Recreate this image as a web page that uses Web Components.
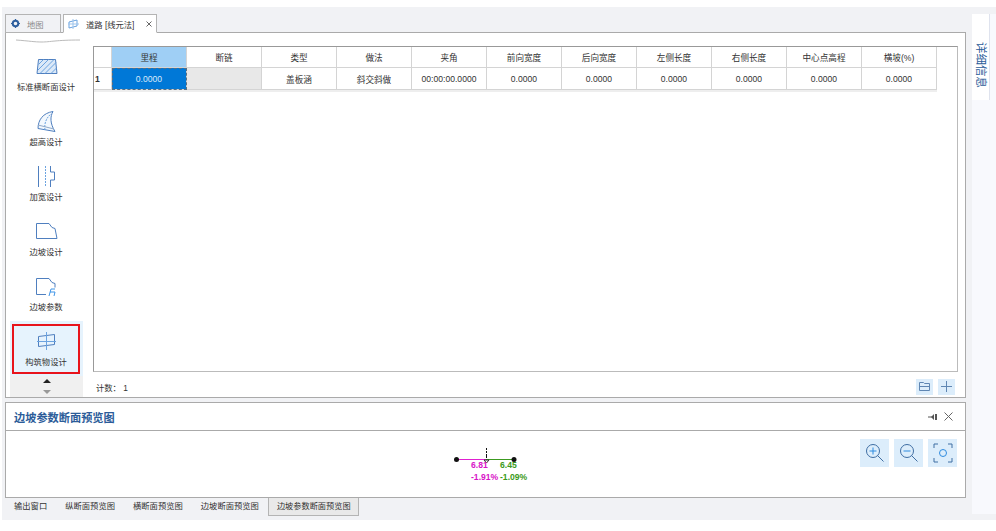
<!DOCTYPE html>
<html lang="zh">
<head>
<meta charset="utf-8">
<title>道路</title>
<style>
  html, body { margin: 0; background: #fff; }
  body { font: 8.3px "Liberation Sans", "Noto Sans CJK SC", sans-serif; color: #333; }
</style>
</head>
<body>
<app-shell>
  <doc-tabs slot="tabs"></doc-tabs>
  <side-nav slot="nav"></side-nav>
  <data-grid slot="grid"></data-grid>
  <grid-footer slot="footer"></grid-footer>
  <preview-panel slot="preview"></preview-panel>
  <bottom-tabs slot="bottom"></bottom-tabs>
  <detail-rail slot="rail"></detail-rail>
</app-shell>

<script>
const navIcons = {
  section: `<path d="M5.500 3.500h17l1.500 14h-20z" fill="#dbe9f8" stroke="#4f7fbf"/><path d="M5.500 8.500l5-5M5 14L15.500 3.500M7 17.500L21 3.500M12 17.500L23 6.500M18 17.500l5.500-5.500" stroke="#6ba3e0" fill="none"/>`,
  super: `<path d="M5 17.500C5 9 10 2 20 .5c-3 5-3 12 2 20z" fill="#f3f8fd" stroke="#4f7fbf"/><path d="M12 19c-1-6 1-12 6-16" stroke="#6ba3e0" stroke-dasharray="2 1" fill="none"/><path d="M5 14l16 4" stroke="#8fa9c9" fill="none"/>`,
  widen: `<path d="M5.500 0v21M17.500 0v6h4v8h-4v7" stroke="#4f7fbf" fill="none"/><path d="M12.500 0v21" stroke="#6ba3e0" stroke-dasharray="2 1" fill="none"/>`,
  slope: `<path d="M3.500 2.500h12.500l3 4 3 1 2 10h-20.500z" fill="none" stroke="#4f7fbf"/>`,
  param: `<path d="M13 18.500H3.500v-16h12.500l3 4 3 1v4" fill="none" stroke="#4f7fbf"/><path d="M16 20l2-7h4M17 16h5l-1 4" fill="none" stroke="#3d94e8"/>`,
  build: `<path d="M5.500 5.500l16-2v10l-16 2z" fill="none" stroke="#4f7fbf"/><path d="M4 10.500h19M13.500 1v18" stroke="#6ba3e0" fill="none"/>`
};

class AppShell extends HTMLElement {
  constructor() {
    super();
    this.attachShadow({ mode: 'open' });
    this.shadowRoot.innerHTML = `
      <style>
        :host { display: flex; width: 994px; height: 513px; margin: 7px 0 0 2px; background: #f1f2f5; }
        .main { flex: none; box-sizing: border-box; width: 970px; padding: 7px 6px 0 3px; display: flex; flex-direction: column; }
        .work { flex: none; height: 366px; box-sizing: border-box; background: #fff; border: 1px solid #aaa; display: flex; }
        .right { flex: 1; min-width: 0; display: flex; flex-direction: column; padding: 13px 7px 0 0; }
      </style>
      <div class="main">
        <slot name="tabs"></slot>
        <div class="work">
          <slot name="nav"></slot>
          <div class="right">
            <slot name="grid"></slot>
            <slot name="footer"></slot>
          </div>
        </div>
        <slot name="preview"></slot>
        <slot name="bottom"></slot>
      </div>
      <slot name="rail"></slot>
    `;
  }
}

class DocTabs extends HTMLElement {
  constructor() {
    super();
    this.attachShadow({ mode: 'open' });
    this.shadowRoot.innerHTML = `
      <style>
        :host { display: flex; height: 19px; gap: 2px; margin-bottom: -1px; position: relative; z-index: 1; }
        .tab { box-sizing: border-box; height: 19px; display: flex; align-items: center; border: 1px solid #b4b4b4; color: #8a8a8a; background: #f1f2f5; }
        .map { width: 56px; padding-left: 5px; gap: 7px; }
        .road { width: 94px; padding-left: 4px; background: #fff; border-bottom-color: #fff; color: #333; }
        .x { margin-left: auto; margin-right: 4px; }
      </style>
      <div class="tab map">
        <svg width="9" height="9" viewBox="0 0 9 9"><circle cx="4.500" cy="4.500" r="2.800" fill="none" stroke="#2e5f9e" stroke-width="2"/><path d="M4.500 0v2M4.500 7v2M0 4.500h2M7 4.500h2" stroke="#2e5f9e" stroke-width="1.200"/></svg>
        <span>地图</span>
      </div>
      <div class="tab road">
        <svg width="11" height="10" viewBox="0 0 11 10" style="margin-right:7px"><path d="M1 3l8-2v6l-8 2z" fill="none" stroke="#6ba3e0"/><path d="M0 5h11M5 0v10" stroke="#9cc3ec" fill="none"/></svg>
        <span>道路 [线元法]</span>
        <svg class="x" width="6" height="6" viewBox="0 0 6 6"><path d="M.5.5l5 5M5.500.5l-5 5" stroke="#666"/></svg>
      </div>
    `;
  }
}

class NavItem extends HTMLElement {
  constructor() {
    super();
    this.attachShadow({ mode: 'open' });
    this.shadowRoot.innerHTML = `
      <style>
        :host { display: block; flex: none; width: 73px; height: 55px; margin-left: 4px; padding-top: 3px; box-sizing: border-box; }
        :host([active]) { background: #e6f3fd; }
        .box { box-sizing: border-box; width: 68px; height: 50px; margin-left: 2px; padding-top: 5px; border: 2px solid transparent; display: flex; flex-direction: column; align-items: center; gap: 5px; }
        :host([active]) .box { border-color: #e8141c; }
        svg { display: block; flex: none; }
        span { line-height: 10px; white-space: nowrap; color: #333; }
      </style>
      <div class="box">
        <svg width="27" height="21" viewBox="0 0 27 21"></svg>
        <span><slot></slot></span>
      </div>
    `;
  }
  connectedCallback() {
    this.shadowRoot.querySelector('svg').innerHTML = navIcons[this.getAttribute('icon')];
  }
}

class SideNav extends HTMLElement {
  constructor() {
    super();
    this.attachShadow({ mode: 'open' });
    this.shadowRoot.innerHTML = `
      <style>
        :host { display: flex; flex-direction: column; width: 87px; flex: none; height: 364px; }
        .wave { display: block; height: 12px; margin: 1px 0 0 4px; flex: none; }
        .more { margin-left: 4px; width: 73px; flex: 1; background: #f0f0f0; display: flex; flex-direction: column; align-items: center; justify-content: center; gap: 7px; }
        .more i { width: 0; height: 0; border: 4px solid transparent; border-top: 0; display: block; }
        .up { border-bottom-color: #222 !important; }
        .down { border-bottom: 0 !important; border-top: 4px solid #999 !important; }
      </style>
      <svg class="wave" width="76" height="12" viewBox="0 0 76 12"><path d="M6 6c14 1 18 2 26 2 8 0 14-2 38-2" fill="none" stroke="#bbb"/></svg>
      <nav-item icon="section">标准横断面设计</nav-item>
      <nav-item icon="super">超高设计</nav-item>
      <nav-item icon="widen">加宽设计</nav-item>
      <nav-item icon="slope">边坡设计</nav-item>
      <nav-item icon="param">边坡参数</nav-item>
      <nav-item icon="build" active>构筑物设计</nav-item>
      <div class="more"><i class="up"></i><i class="down"></i></div>
    `;
  }
}

const gridHeads = ['里程','断链','类型','做法','夹角','前向宽度','后向宽度','左侧长度','右侧长度','中心点高程','横坡(%)'];
const gridRow = ['0.0000','','盖板涵','斜交斜做','00:00:00.0000','0.0000','0.0000','0.0000','0.0000','0.0000','0.0000'];

class DataGrid extends HTMLElement {
  constructor() {
    super();
    this.attachShadow({ mode: 'open' });
    this.shadowRoot.innerHTML = `
      <style>
        :host { display: block; flex: none; box-sizing: border-box; height: 326px; border: 1px solid #999; border-right-color: #bbb; border-bottom-color: #bbb; }
        .rows { display: grid; grid-template-columns: 18px repeat(11, 75px); grid-template-rows: 21px 22px; border-bottom: 2px solid #eee; width: max-content; }
        .c { box-sizing: border-box; display: flex; align-items: center; justify-content: center; border-right: 1px solid #d4d4d4; border-bottom: 1px solid #d4d4d4; color: #333; white-space: nowrap; font-size: 8.600px; }
        .sel-h { background: #9fcff5; }
        .sel { background: #0078d7; color: #d8eafa; outline: 1px dashed #5a6f80; outline-offset: -1px; }
        .off { background: #e8e8e8; }
        .idx { justify-content: flex-start; padding-left: 1px; font-weight: bold; }
      </style>
      <div class="rows">
        <div class="c"></div>
        ${gridHeads.map((h, i) => `<div class="c ${i == 0 ? 'sel-h' : ''}">${h}</div>`).join('')}
        <div class="c idx">1</div>
        ${gridRow.map((v, i) => `<div class="c ${i == 0 ? 'sel' : i == 1 ? 'off' : ''}">${v}</div>`).join('')}
      </div>
    `;
  }
}

class GridFooter extends HTMLElement {
  constructor() {
    super();
    this.attachShadow({ mode: 'open' });
    this.shadowRoot.innerHTML = `
      <style>
        :host { display: flex; align-items: center; box-sizing: border-box; height: 25px; padding: 4px 3px 0 3px; gap: 5px; }
        span { margin-right: auto; }
        .btn { width: 17px; height: 16px; background: #dcedfb; display: flex; align-items: center; justify-content: center; }
      </style>
      <span>计数： 1</span>
      <div class="btn"><svg width="13" height="11" viewBox="0 0 13 11"><path d="M1.500 9.500v-8h4l1 1h5v7zM1.500 5.500h10" fill="none" stroke="#5f86b3"/></svg></div>
      <div class="btn"><svg width="11" height="11" viewBox="0 0 11 11"><path d="M5.500 0v11M0 5.500h11" stroke="#5f86b3"/></svg></div>
    `;
  }
}

class PreviewPanel extends HTMLElement {
  constructor() {
    super();
    this.attachShadow({ mode: 'open' });
    this.shadowRoot.innerHTML = `
      <style>
        :host { display: block; flex: none; box-sizing: border-box; height: 96px; margin-top: 4px; background: #fff; border: 1px solid #aaa; position: relative; }
        header { box-sizing: border-box; height: 28px; border-bottom: 1px solid #aaa; display: flex; align-items: center; padding: 0 12px 0 8px; gap: 6px; }
        h2 { margin: 0 auto 0 0; font-size: 11.200px; font-weight: bold; color: #2c5c99; }
        .body { height: 66px; position: relative; }
        .tools { position: absolute; top: 8px; right: 8px; display: flex; gap: 5px; }
        .tool { width: 29px; height: 28px; background: #dcedfb; display: flex; align-items: center; justify-content: center; }
        .sketch { position: absolute; left: 424px; top: 9px; }
        .sketch text { font: bold 8.600px "Liberation Sans", sans-serif; }
      </style>
      <header>
        <h2>边坡参数断面预览图</h2>
        <svg width="10" height="8" viewBox="0 0 10 8"><path d="M0 4h5" stroke="#555"/><path d="M3 4l3-3v6zM7 1h2v6H7z" fill="#555"/></svg>
        <svg width="9" height="9" viewBox="0 0 9 9"><path d="M.5.5l8 8M8.500.5l-8 8" stroke="#666"/></svg>
      </header>
      <div class="body">
        <svg class="sketch" width="110" height="46" viewBox="0 0 110 46">
          <path d="M56.500 8v2M56.500 11v2M56.500 14v4" stroke="#111"/>
          <path d="M26 19.500h30" stroke="#e020d0"/>
          <path d="M56 19.500h28" stroke="#3c9a20"/>
          <path d="M54 20h5l-2.500 3z" fill="none" stroke="#333"/>
          <circle cx="26.500" cy="19.500" r="2.500" fill="#111"/>
          <circle cx="84" cy="19.500" r="2.500" fill="#111"/>
          <text x="41" y="28" fill="#d814c8">6.81</text>
          <text x="70" y="28" fill="#3c9a20">6.45</text>
          <text x="41" y="40" fill="#d814c8">-1.91%</text>
          <text x="70" y="40" fill="#3c9a20">-1.09%</text>
        </svg>
        <div class="tools">
          <div class="tool"><svg width="20" height="20" viewBox="0 0 20 20"><circle cx="8" cy="8" r="6.500" fill="none" stroke="#3f6ea3"/><path d="M12.500 12.500l6 6" stroke="#3f6ea3"/><path d="M8 4.500v7M4.500 8h7" stroke="#2f8ce0"/></svg></div>
          <div class="tool"><svg width="20" height="20" viewBox="0 0 20 20"><circle cx="8" cy="8" r="6.500" fill="none" stroke="#3f6ea3"/><path d="M12.500 12.500l6 6" stroke="#3f6ea3"/><path d="M4.500 8h7" stroke="#2f8ce0"/></svg></div>
          <div class="tool"><svg width="20" height="20" viewBox="0 0 20 20"><path d="M1 5V1h4M15 1h4v4M19 15v4h-4M5 19H1v-4" fill="none" stroke="#3f6ea3"/><circle cx="10" cy="10" r="3.500" fill="none" stroke="#2f8ce0"/></svg></div>
        </div>
      </div>
    `;
  }
}

class BottomTabs extends HTMLElement {
  constructor() {
    super();
    this.attachShadow({ mode: 'open' });
    const tabs = ['输出窗口','纵断面预览图','横断面预览图','边坡断面预览图'];
    this.shadowRoot.innerHTML = `
      <style>
        :host { display: flex; flex: none; height: 18px; padding-left: 9px; gap: 18px; align-items: flex-start; }
        span { line-height: 17px; white-space: nowrap; }
        .on { box-sizing: border-box; height: 18px; margin-left: -9px; padding: 0 7px 0 8px; font-size: 8.200px; background: #e9e9e9; border: 1px solid #b4b4b4; border-top: 0; }
      </style>
      ${tabs.map(t => `<span>${t}</span>`).join('')}
      <span class="on">边坡参数断面预览图</span>
    `;
  }
}

class DetailRail extends HTMLElement {
  constructor() {
    super();
    this.attachShadow({ mode: 'open' });
    this.shadowRoot.innerHTML = `
      <style>
        :host { display: block; flex: none; width: 24px; box-sizing: border-box; background: #f8f9fd; margin-top: 7px; height: 500px; }
        .tab { width: 18px; height: 86px; background: #fff; border-right: 1px solid #dfe3ee; box-sizing: border-box; display: flex; justify-content: center; padding-top: 28px; }
        span { writing-mode: vertical-rl; text-orientation: sideways; font-size: 11.500px; color: #2c5c99; line-height: 12px; white-space: nowrap; }
      </style>
      <div class="tab"><span>详细信息</span></div>
    `;
  }
}

customElements.define('app-shell', AppShell);
customElements.define('doc-tabs', DocTabs);
customElements.define('nav-item', NavItem);
customElements.define('side-nav', SideNav);
customElements.define('data-grid', DataGrid);
customElements.define('grid-footer', GridFooter);
customElements.define('preview-panel', PreviewPanel);
customElements.define('bottom-tabs', BottomTabs);
customElements.define('detail-rail', DetailRail);
</script>
</body>
</html>
